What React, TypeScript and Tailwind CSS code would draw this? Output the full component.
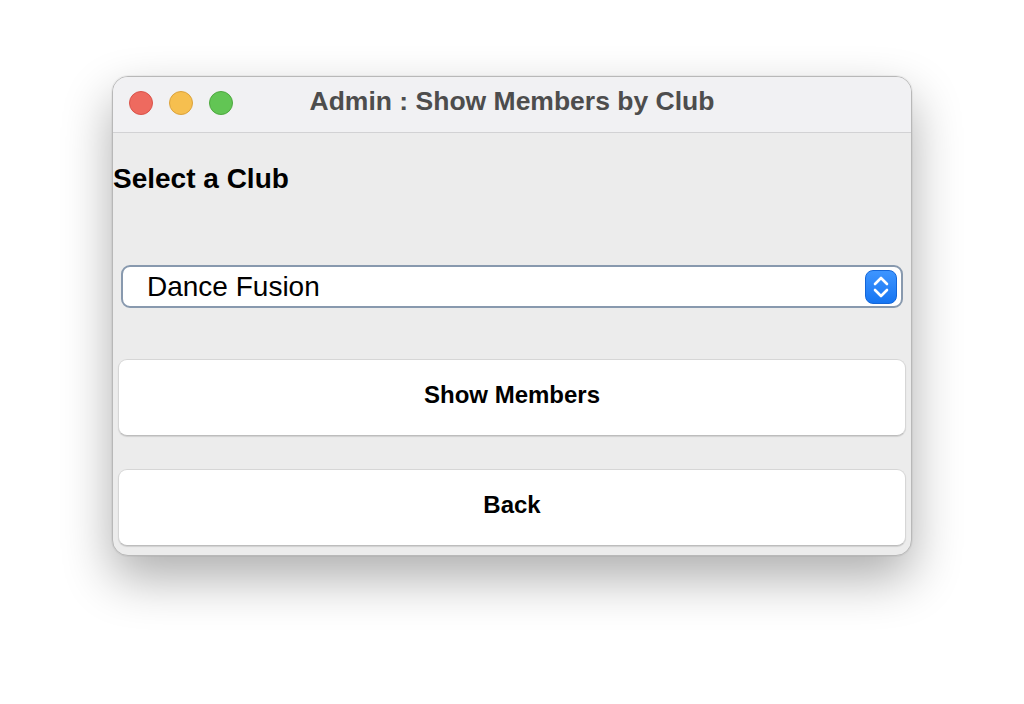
import { useState } from "react";

const clubs = ["Dance Fusion", "Chess Club", "Robotics", "Drama Society"];

const Stepper = () => (
  <div className="flex h-[34px] w-[32px] items-center justify-center rounded-[8px] border border-[#1466d8] bg-gradient-to-b from-[#3d95ff] to-[#1575f2]">
    <svg width="18" height="26" viewBox="0 0 18 26" fill="none">
      <path d="M3 10 L9 4 L15 10" stroke="white" strokeWidth="2.6" strokeLinecap="round" strokeLinejoin="round" />
      <path d="M3 16 L9 22 L15 16" stroke="white" strokeWidth="2.6" strokeLinecap="round" strokeLinejoin="round" />
    </svg>
  </div>
);

export default function App() {
  const [club] = useState(clubs[0]);

  return (
    <div className="min-h-[704px] w-full bg-white pt-[76px] font-['Liberation_Sans',Arial,sans-serif]">
      <div className="mx-auto flex h-[480px] w-[800px] flex-col overflow-hidden rounded-[16px] border border-[#b8b8b8] bg-[#ececec] shadow-[0_22px_50px_rgba(0,0,0,0.32),0_0_0_1px_rgba(0,0,0,0.04)]">
        {/* title bar */}
        <div className="relative flex h-[56px] shrink-0 items-center border-b border-[#d2d2d4] bg-[#f1f1f3]">
          <div className="flex gap-[16px] pb-[3px] pl-[16px]">
            <span className="h-[24px] w-[24px] rounded-full border border-[#d9534a] bg-[#ee6a5f]" />
            <span className="h-[24px] w-[24px] rounded-full border border-[#dba23c] bg-[#f6bf4f]" />
            <span className="h-[24px] w-[24px] rounded-full border border-[#4ea83f] bg-[#62c554]" />
          </div>
          <div className="absolute inset-0 flex items-center justify-center pb-[6px] text-[26.5px] font-bold text-[#4d4d4d]">
            Admin : Show Members by Club
          </div>
        </div>

        {/* content */}
        <div className="flex flex-col">
          <div className="mt-[30px] h-[32px] text-[28px] leading-[32px] font-bold text-black">Select a Club</div>

          <div className="mx-[8px] mt-[70px] flex h-[43px] items-center justify-between rounded-[9px] border-2 border-[#8899ae] bg-white pr-[4px] pl-[24px]">
            <span className="text-[28px] text-black">{club}</span>
            <Stepper />
          </div>

          <button className="mx-[5px] mt-[51px] h-[77px] rounded-[9px] border border-[#d6d6d6] border-b-[#bdbdbd] bg-white pb-[5px] text-[24px] font-bold text-black shadow-[0_1px_1px_rgba(0,0,0,0.12)]">
            Show Members
          </button>
          <button className="mx-[5px] mt-[33px] h-[77px] rounded-[9px] border border-[#d6d6d6] border-b-[#bdbdbd] bg-white pb-[5px] text-[24px] font-bold text-black shadow-[0_1px_1px_rgba(0,0,0,0.12)]">
            Back
          </button>
        </div>
      </div>
    </div>
  );
}
